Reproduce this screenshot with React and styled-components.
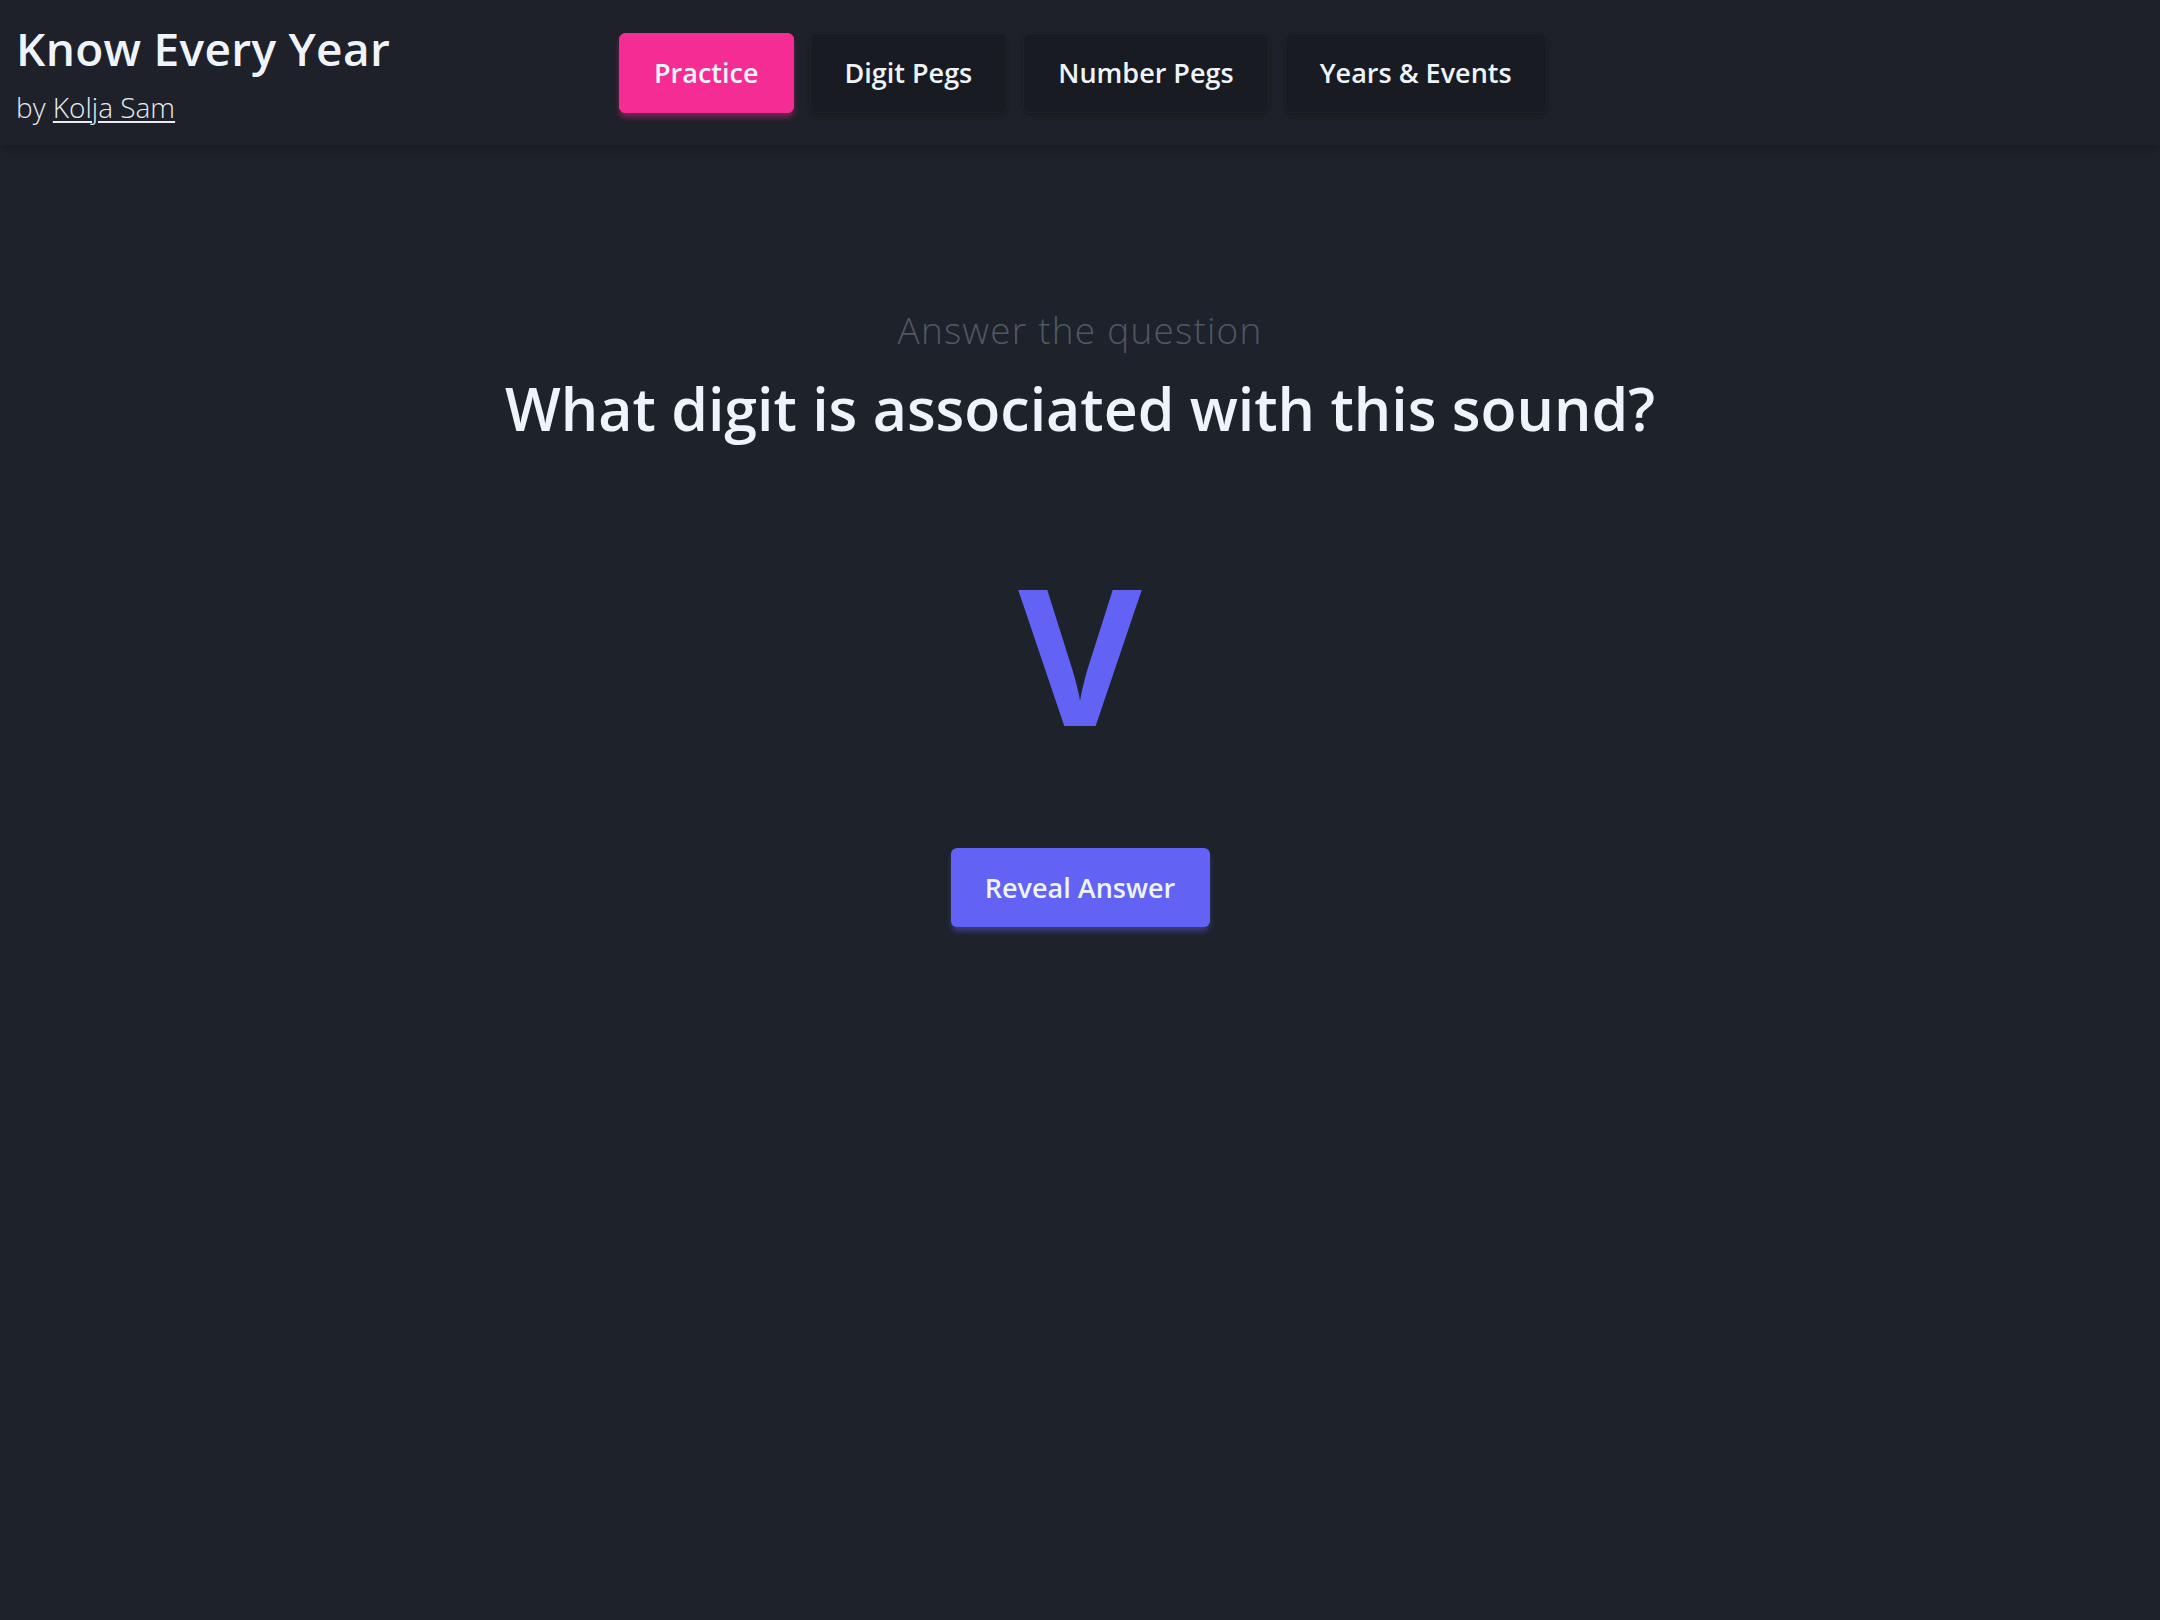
import React from 'react';
import styled, { createGlobalStyle } from 'styled-components';

const GlobalStyle = createGlobalStyle`
  html, body {
    margin: 0;
    padding: 0;
    background: #1e222a;
  }

  body {
    font-family: "Open Sans", Roboto, sans-serif;
    color: #eef4fa;
    min-height: 1620px;
  }
`;

const Page = styled.div`
  min-height: 1620px;
  display: flex;
  flex-direction: column;
`;

const Header = styled.header`
  height: 145px;
  box-sizing: border-box;
  display: flex;
  flex-direction: row;
  align-items: center;
  padding: 0 16px;
  background: #1e2129;
  box-shadow: 0 4px 12px rgba(0, 0, 0, 0.22);
`;

const Brand = styled.div`
  width: 603px;
  display: flex;
  flex-direction: column;
  gap: 15px;
`;

const Title = styled.h1`
  margin: 0;
  font-size: 46px;
  line-height: 1.2;
  font-weight: 600;
  letter-spacing: 0.3px;
  color: #eef4fa;
`;

const Byline = styled.div`
  font-size: 28px;
  line-height: 1.2;
  font-weight: 300;
  color: #e6ecf2;

  a {
    color: inherit;
    text-decoration: underline;
    text-underline-offset: 3px;
    text-decoration-thickness: 2px;
  }
`;

const Nav = styled.nav`
  display: flex;
  flex-direction: row;
  align-items: center;
  gap: 16px;
`;

const NavButton = styled.button`
  height: 80px;
  padding: 0 34px;
  border-radius: 6px;
  font-family: "Open Sans", Roboto, sans-serif;
  font-size: 27px;
  font-weight: 600;
  color: #eef4fa;
  cursor: pointer;
  border: 1px solid ${(p) => (p.active ? '#f52c93' : 'rgba(255, 255, 255, 0.03)')};
  background: ${(p) => (p.active ? '#f52c93' : '#181b21')};
  box-shadow: ${(p) =>
    p.active
      ? '0 5px 6px -1px rgba(245, 44, 147, 0.45)'
      : '0 2px 4px rgba(0, 0, 0, 0.25)'};
`;

const Main = styled.main`
  display: flex;
  flex-direction: column;
  align-items: center;
  padding-top: 163px;
`;

const Prompt = styled.div`
  font-size: 37px;
  line-height: 1.2;
  font-weight: 300;
  letter-spacing: 1.2px;
  color: #505765;
`;

const Question = styled.h2`
  margin: 21px 0 0;
  font-size: 59px;
  line-height: 1.2;
  font-weight: 600;
  color: #eef4fa;
`;

const Sound = styled.div`
  margin-top: 114px;
  font-size: 190px;
  line-height: 1;
  font-weight: 700;
  color: #6262f4;
`;

const RevealButton = styled.button`
  margin-top: 100px;
  width: 259px;
  height: 79px;
  border: none;
  border-radius: 6px;
  background: #6262f4;
  color: #eef4fa;
  font-family: "Open Sans", Roboto, sans-serif;
  font-size: 27px;
  font-weight: 600;
  cursor: pointer;
  box-shadow: 0 5px 6px -1px rgba(98, 98, 244, 0.45);
`;

const tabs = ['Practice', 'Digit Pegs', 'Number Pegs', 'Years & Events'];

const App = () => (
  <Page>
    <GlobalStyle />
    <Header>
      <Brand>
        <Title>Know Every Year</Title>
        <Byline>
          by <a href="#">Kolja Sam</a>
        </Byline>
      </Brand>
      <Nav>
        {tabs.map((t) => (
          <NavButton key={t} active={t === 'Practice'}>
            {t}
          </NavButton>
        ))}
      </Nav>
    </Header>

    <Main>
      <Prompt>Answer the question</Prompt>
      <Question>What digit is associated with this sound?</Question>
      <Sound>V</Sound>
      <RevealButton>Reveal Answer</RevealButton>
    </Main>
  </Page>
);

export default App;
